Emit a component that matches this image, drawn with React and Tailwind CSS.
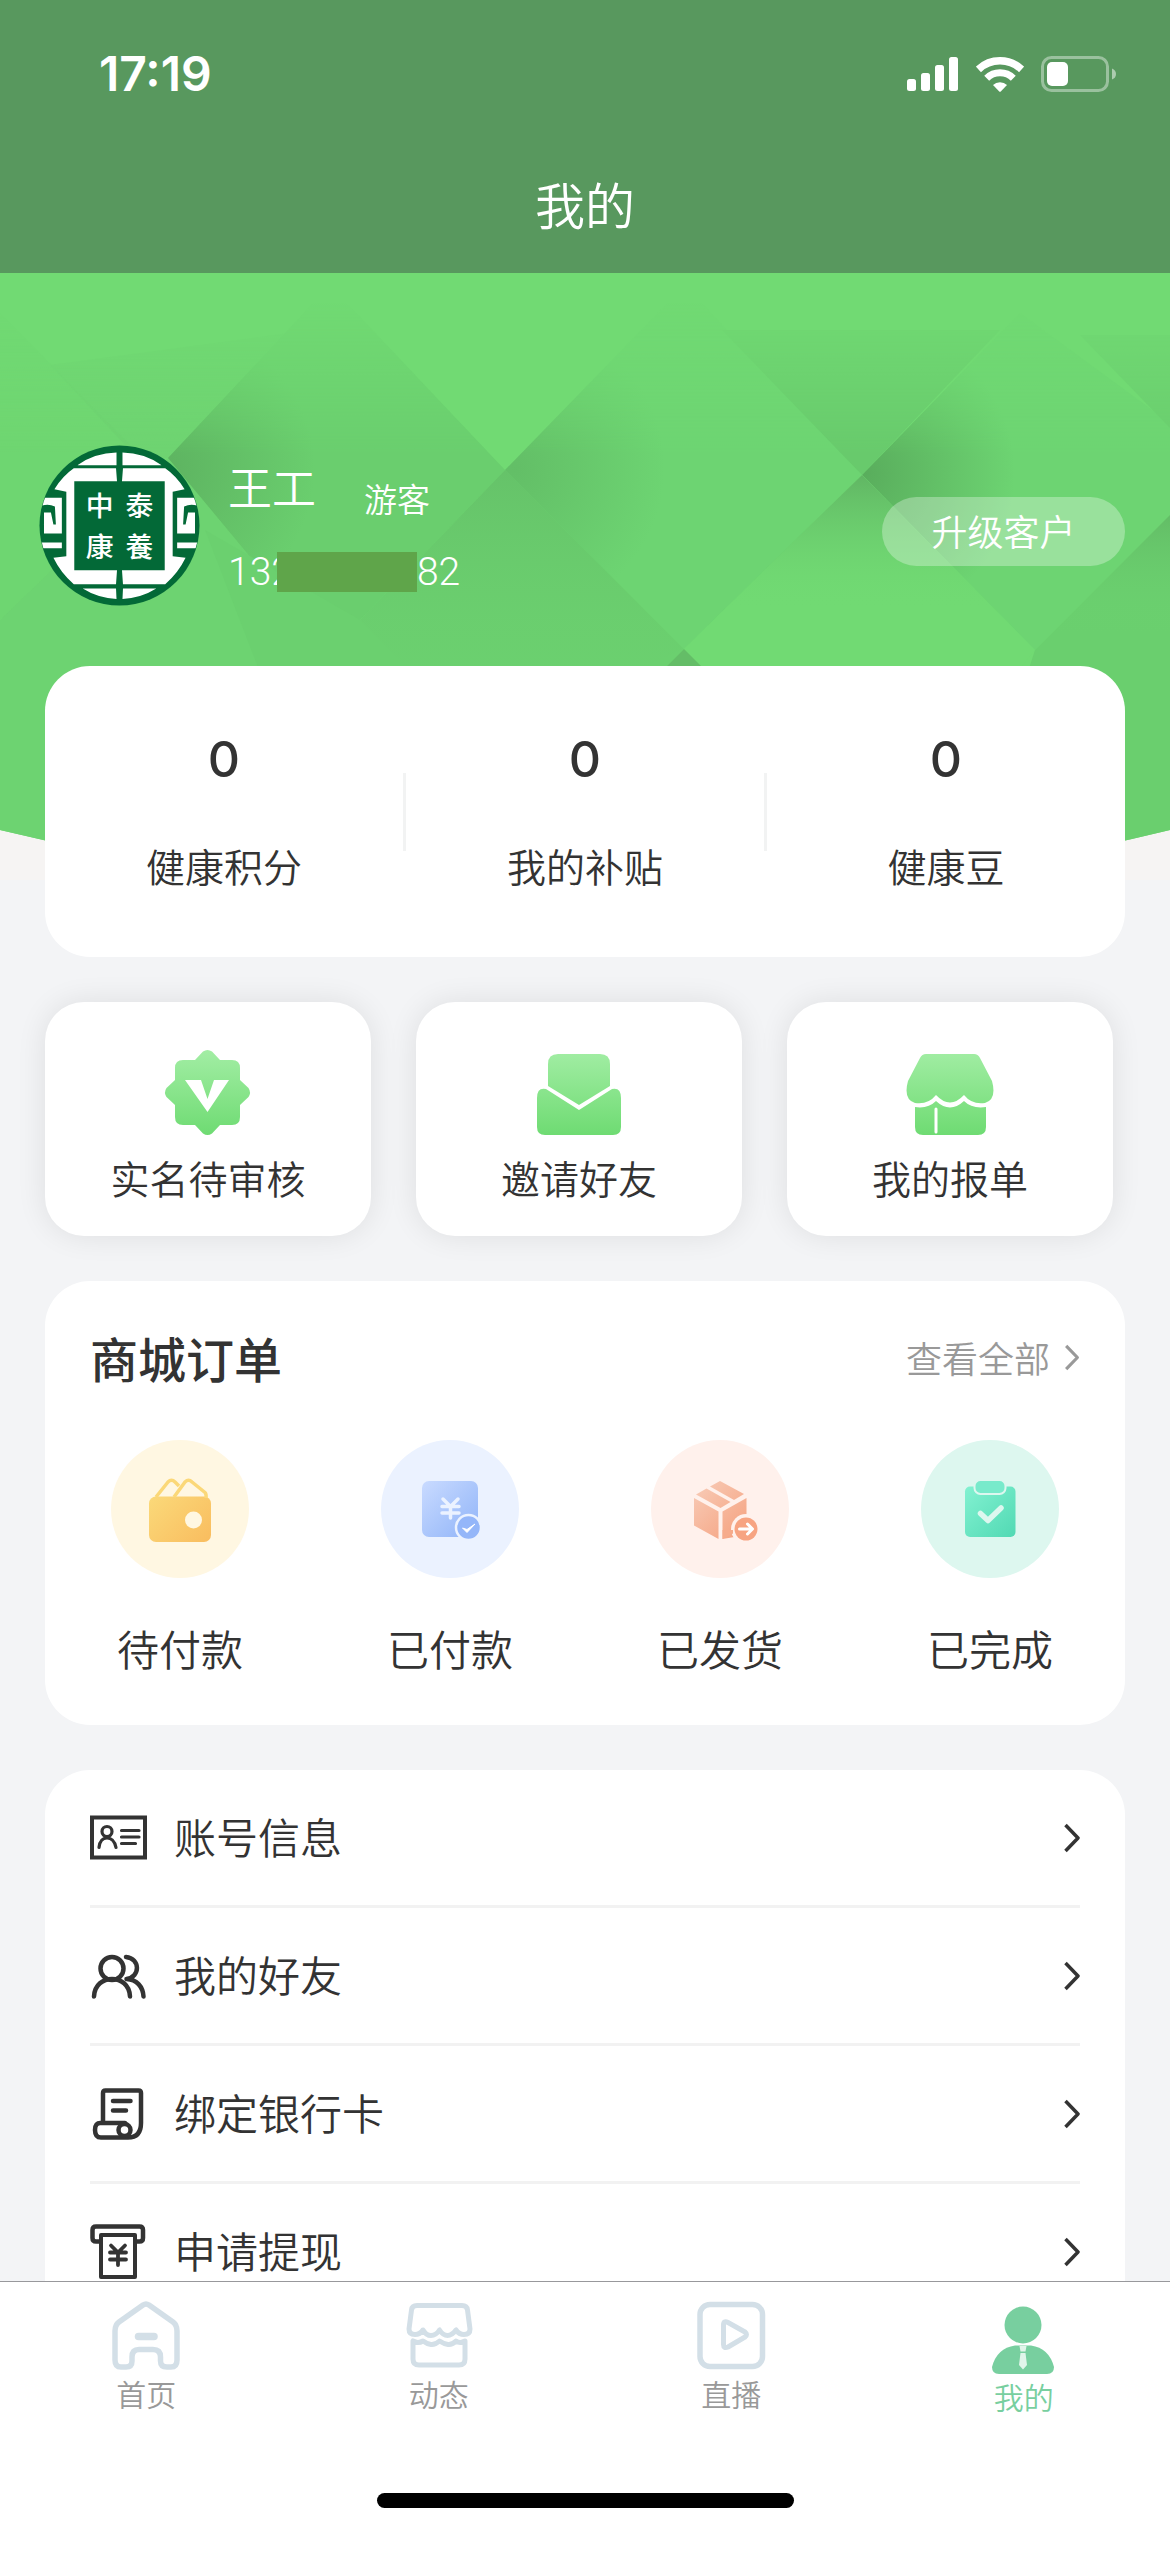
import React from "react";

const FONT = "font-['Noto_Sans_CJK_SC',sans-serif]";

function SignalIcon() {
  return (
    <svg viewBox="0 0 52 34" className="h-[34px] w-[52px]" fill="#fff" aria-hidden="true">
      <rect x="0" y="22" width="9" height="12" rx="2.5" />
      <rect x="14" y="16" width="9" height="18" rx="2.5" />
      <rect x="28" y="8" width="9" height="26" rx="2.5" />
      <rect x="42" y="0" width="9" height="34" rx="2.5" />
    </svg>
  );
}

function WifiIcon() {
  return (
    <svg viewBox="0 0 48 37" className="h-[37px] w-[48px]" fill="none" stroke="#fff" aria-hidden="true">
      <path d="M2.4 13.4A31.500 31.500 0 0 1 45.600 13.400" strokeWidth="7.500" />
      <path d="M10.700 22.200A19 19 0 0 1 37.300 22.200" strokeWidth="7" />
      <path d="M17 29a10 10 0 0 1 14 0l-6 6.200q-1 1-2 0Z" fill="#fff" stroke="none" />
    </svg>
  );
}

function BatteryIcon() {
  return (
    <svg viewBox="0 0 75 36" className="h-[36px] w-[75px]" aria-hidden="true">
      <rect x="1.5" y="1.500" width="65" height="33" rx="9" fill="none" stroke="#fff" strokeOpacity=".4" strokeWidth="3" />
      <rect x="6" y="6" width="21" height="24" rx="5" fill="#fff" />
      <path d="M71 12.500q4 1.500 4 5.500t-4 5.500Z" fill="#fff" fillOpacity=".5" />
    </svg>
  );
}

function HeroBackdrop() {
  return (
    <svg
      viewBox="0 0 1170 607"
      preserveAspectRatio="none"
      className="absolute inset-x-0 top-0 -z-10 h-[607px] w-full"
      aria-hidden="true"
    >
      <defs>
        <clipPath id="heroCurve">
          <path d="M0 0H1170V557Q585 700 0 557Z" />
        </clipPath>
        <linearGradient id="fadeUp" x1="0" y1="0" x2="0" y2="1">
          <stop offset="0" stopColor="#5fb262" stopOpacity=".9" />
          <stop offset=".75" stopColor="#6ccf6f" stopOpacity=".2" />
          <stop offset="1" stopColor="#71da73" stopOpacity="0" />
        </linearGradient>
        <radialGradient id="shadeOne" gradientUnits="userSpaceOnUse" cx="165" cy="195" r="150">
          <stop offset="0" stopColor="#5cb05f" stopOpacity=".9" />
          <stop offset="1" stopColor="#5cb05f" stopOpacity="0" />
        </radialGradient>
        <radialGradient id="shadeTwo" gradientUnits="userSpaceOnUse" cx="515" cy="195" r="150">
          <stop offset="0" stopColor="#5cb05f" stopOpacity=".6" />
          <stop offset="1" stopColor="#5cb05f" stopOpacity="0" />
        </radialGradient>
        <radialGradient id="shadeThree" gradientUnits="userSpaceOnUse" cx="865" cy="200" r="150">
          <stop offset="0" stopColor="#57a95a" stopOpacity=".9" />
          <stop offset="1" stopColor="#57a95a" stopOpacity="0" />
        </radialGradient>
        <linearGradient id="maskFade" gradientUnits="userSpaceOnUse" x1="0" y1="30" x2="0" y2="180">
          <stop offset="0" stopColor="#000" />
          <stop offset="1" stopColor="#fff" />
        </linearGradient>
        <mask id="topFade">
          <rect width="1170" height="607" fill="url(#maskFade)" />
        </mask>
      </defs>
      <rect width="1170" height="607" fill="#f6f4f3" />
      <g clipPath="url(#heroCurve)">
        <rect width="1170" height="607" fill="#71da73" />
        <g mask="url(#topFade)">
          <path d="M0 40L168 210L0 347Z" fill="#6ccf6f" fillOpacity=".4" />
          <path d="M50 92L290 60L168 185L140 188Z" fill="#6ccf6f" fillOpacity=".6" />
          <path d="M0 347L168 185L340 392L560 607H0Z" fill="#6dd371" />
          <path d="M330 12L505 197L360 347L340 392L168 185Z" fill="#6ace6e" />
          <path d="M330 12L505 197L360 347L340 392L168 185Z" fill="url(#shadeOne)" />
          <path d="M505 197L684 376V607H340L205 257L360 347Z" fill="#6bd06f" />
          <path d="M685 12L862 202L684 376L505 197Z" fill="#6dd472" />
          <path d="M685 12L862 202L684 376L505 197Z" fill="url(#shadeTwo)" />
          <path d="M722 57L862 202L1000 57Z" fill="#68ca6c" />
          <path d="M1020 40L1170 150V242L1035 377L862 202Z" fill="#6dd472" />
          <path d="M1020 40L1170 150V242L1035 377L862 202Z" fill="url(#shadeThree)" />
          <path d="M1080 62L1170 155V62Z" fill="#6acd6e" />
        </g>
        <path d="M505 197L684 376L480 470L360 347Z" fill="url(#fadeUp)" fillOpacity=".5" />
        <path d="M862 202L1035 377L1000 420H640L684 376Z" fill="#71da73" />
        <path d="M862 202L995 337H723Z" fill="url(#fadeUp)" />
        <path d="M684 376L640 420H728Z" fill="#64bd67" />
        <path d="M1170 242V607H960L1035 377Z" fill="#6acf6e" />
        <path d="M1170 242V360H1052Z" fill="url(#fadeUp)" fillOpacity=".7" />
      </g>
    </svg>
  );
}

function Emblem() {
  return (
    <svg viewBox="0 0 162 162" className="size-[161px] shrink-0" role="img" aria-label="中泰康養">
      <defs>
        <clipPath id="emblemClip">
          <circle cx="81" cy="81" r="80" />
        </clipPath>
      </defs>
      <circle cx="81" cy="81" r="80.500" fill="#036937" />
      <g clipPath="url(#emblemClip)" fill="#fff">
        <path d="M39 20Q56 8 78 7.500V20.500H39ZM123 20Q106 8 84 7.500V20.500H123Z" />
        <path d="M44 144.500H77.500L78 155Q59 154 44 144.500ZM118 144.500H84.500L84 155Q103 154 118 144.500Z" />
        <path d="M35 23.500H77.500L78.500 36.500H35.500V126H78.500L77.500 140H35Q22 129 14.500 113.500L27.500 112V47L15.500 44.500Q24 31 35 23.500Z" />
        <path d="M127 23.500H84.500L83.500 36.500H126.500V126H83.500L84.500 140H127Q140 129 147.500 113.500L134.500 112V47L146.500 44.500Q138 31 127 23.500Z" />
        <path d="M4 53H23V89H5V68H12L14.500 80H17L16 62Q10 59 3 61Z" />
        <path d="M158 53H139V89H157V68H150L147.500 80H145L146 62Q152 59 159 61Z" />
        <path d="M2 98H23V104H4ZM160 98H139V104H158Z" />
      </g>
      <g fill="#fff" fontFamily="'Noto Sans CJK SC', sans-serif" fontSize="28" fontWeight="500" textAnchor="middle">
        <text x="61" y="71">中</text>
        <text x="101" y="71">泰</text>
        <text x="61" y="113">康</text>
        <text x="101" y="113">養</text>
      </g>
    </svg>
  );
}

function GreenFill({ id }) {
  return (
    <defs>
      <linearGradient id={id} gradientUnits="userSpaceOnUse" x1="0" y1="4" x2="0" y2="88">
        <stop offset="0" stopColor="#a1eda3" />
        <stop offset="1" stopColor="#6edb72" />
      </linearGradient>
    </defs>
  );
}

function BadgeIcon() {
  return (
    <svg viewBox="0 0 90 90" className="size-[90px]" aria-hidden="true">
      <GreenFill id="badgeFill" />
      <path
        fill="url(#badgeFill)"
        d="M40 3.500Q44.500 .5 49 3.500L57 12H69Q77 12 77 20V32L85.500 40Q88.500 44.500 85.500 49L77 57V69Q77 77 69 77H57L49 85.500Q44.500 88.500 40 85.500L32 77H20Q12 77 12 69V57L3.500 49Q.5 44.500 3.500 40L12 32V20Q12 12 20 12H32Z"
      />
      <path fill="#fff" d="M22 32H38L44.500 51L51 32H66L44.500 64Z" />
    </svg>
  );
}

function InviteIcon() {
  return (
    <svg viewBox="0 0 90 90" className="size-[90px]" aria-hidden="true">
      <GreenFill id="inviteFill" />
      <g fill="url(#inviteFill)">
        <path d="M14 38V16Q14 6 24 6H66Q76 6 76 16V38L45 57Z" />
        <path d="M3 50Q3 39 12 41L45 62L78 41Q87 39 87 50V79Q87 87 79 87H11Q3 87 3 79Z" />
      </g>
    </svg>
  );
}

function ShopIcon() {
  return (
    <svg viewBox="0 0 90 90" className="size-[90px]" aria-hidden="true">
      <GreenFill id="shopFill" />
      <g fill="url(#shopFill)">
        <path d="M21 6H69Q73 6 75 10L87 33Q92 51 80 55Q67 57 59 47Q45 62 31 47Q23 57 10 55Q-2 51 3 33L15 10Q17 6 21 6Z" />
        <path d="M10 59Q23 61 31 53Q45 66 59 53Q67 61 81 59V79Q81 87 73 87H18Q10 87 10 79Z" />
      </g>
      <path d="M31 61V84" stroke="#fff" strokeWidth="3" strokeLinecap="round" />
    </svg>
  );
}

function OrderFill({ id, from, to }) {
  return (
    <defs>
      <linearGradient id={id} gradientUnits="userSpaceOnUse" x1="42" y1="42" x2="98" y2="98">
        <stop offset="0" stopColor={from} />
        <stop offset="1" stopColor={to} />
      </linearGradient>
    </defs>
  );
}

function WalletIcon() {
  return (
    <svg viewBox="0 0 138 138" className="size-[138px]" aria-hidden="true">
      <OrderFill id="walletFill" from="#fbdc7c" to="#f9be60" />
      <circle cx="69" cy="69" r="69" fill="#fff7e2" />
      <rect x="38" y="56.500" width="62" height="45.500" rx="7" fill="url(#walletFill)" />
      <path
        d="M45 57L57 42Q60.500 38.500 64 42L68 46M63 57L74 42Q77.500 38.500 81 42L94 52.500Q95.500 54 95 58"
        fill="none"
        stroke="#fbd878"
        strokeWidth="3.500"
        strokeLinejoin="round"
      />
      <circle cx="82.500" cy="80" r="8.500" fill="#fff7e2" />
    </svg>
  );
}

function PaidIcon() {
  return (
    <svg viewBox="0 0 138 138" className="size-[138px]" aria-hidden="true">
      <OrderFill id="paidFill" from="#c8daff" to="#8fb3f8" />
      <circle cx="69" cy="69" r="69" fill="#ebf2ff" />
      <rect x="41" y="41" width="56" height="56" rx="7" fill="url(#paidFill)" />
      <path d="M62 59L69.500 66.500L77 59M61 66.500H78M61 73H78M69.500 66.500V78" fill="none" stroke="#ebf2ff" strokeWidth="3.500" strokeLinecap="round" />
      <circle cx="87.500" cy="87.500" r="12.500" fill="#94b6f9" stroke="#ebf2ff" strokeWidth="2.500" />
      <path d="M81.500 88L86 92.500L94 84L86 89.500Z" fill="#fff" stroke="#fff" strokeLinejoin="round" />
    </svg>
  );
}

function ShippedIcon() {
  return (
    <svg viewBox="0 0 138 138" className="size-[138px]" aria-hidden="true">
      <OrderFill id="shipFill" from="#f8cdb9" to="#f59f7c" />
      <circle cx="69" cy="69" r="69" fill="#fff1ec" />
      <g fill="url(#shipFill)">
        <path d="M69 41L93 54L83 60L59 46.500Z" />
        <path d="M55.500 48.500L79.500 62L69.500 68L45 54.500Z" />
        <path d="M43 58L67.500 71.500V99L43 85.500Z" />
        <path d="M71.500 71.500L95.500 58V95L71.500 99Z" />
      </g>
      <circle cx="95" cy="89" r="15" fill="#fff1ec" />
      <path d="M71.500 90H82V93.500L71.500 99Z" fill="#f6ab8b" />
      <circle cx="95" cy="89" r="11.500" fill="#f7a482" />
      <path d="M88.500 89H100M96.500 84L101.500 89L96.500 94" fill="none" stroke="#fff" strokeWidth="3" strokeLinecap="round" strokeLinejoin="round" />
    </svg>
  );
}

function DoneIcon() {
  return (
    <svg viewBox="0 0 138 138" className="size-[138px]" aria-hidden="true">
      <OrderFill id="doneFill" from="#86f3d3" to="#4fd8b2" />
      <circle cx="69" cy="69" r="69" fill="#ddf7ef" />
      <rect x="44" y="46.500" width="50.500" height="50.500" rx="5" fill="url(#doneFill)" />
      <rect x="53.500" y="40" width="31" height="14" rx="6" fill="#78eacb" stroke="#ddf7ef" strokeWidth="2" />
      <path d="M59.500 73.500L67 80.500L80 68" fill="none" stroke="#ddf7ef" strokeWidth="5.500" strokeLinecap="round" strokeLinejoin="round" />
    </svg>
  );
}

function LineIcon({ children, width = 4.5 }) {
  return (
    <svg
      viewBox="0 0 57 57"
      className="size-[57px]"
      fill="none"
      stroke="#333"
      strokeWidth={width}
      strokeLinecap="round"
      strokeLinejoin="round"
      aria-hidden="true"
    >
      {children}
    </svg>
  );
}

const AccountIcon = () => (
  <LineIcon width={3.2}>
    <rect x="2" y="8.500" width="53" height="40" strokeLinejoin="miter" strokeWidth="4" />
    <circle cx="17" cy="22.500" r="5" />
    <path d="M9 38.500Q10 29 17 29T26 38.500M31.500 21.500H49M31.500 28H49M31.500 34.500H45.500" />
  </LineIcon>
);

const FriendsIcon = () => (
  <LineIcon>
    <circle cx="22" cy="21.500" r="11.500" />
    <path d="M4 49.500C5 26 39 26 40 49.500M36 10C50.500 11.500 50.500 30 36.500 32C47 32.500 53 40 53.500 49.500" />
  </LineIcon>
);

const CardIcon = () => (
  <LineIcon>
    <path d="M13 37V8Q13 5.500 15.500 5.500H48.500Q51 5.500 51 8V38Q51 52.500 38 52.500H11Q5 52.500 5 45T11 38H35" />
    <circle cx="34.500" cy="45" r="6" />
    <path d="M23 16H40.500M23 25.500H36" />
  </LineIcon>
);

const WithdrawIcon = () => (
  <LineIcon>
    <path d="M10 18.500H6Q2.500 18.500 2.500 15V7Q2.500 3.500 6 3.500H49.500Q53 3.500 53 7V15Q53 18.500 49.500 18.500H46" />
    <path d="M11 12H45V54H11Z" strokeWidth="4" />
    <path d="M21 22.500L28 29.500L35 22.500M20 29.500H36M20 36.500H36M28 29.500V42" strokeWidth="3.800" />
  </LineIcon>
);

function Chevron({ className }) {
  return (
    <svg viewBox="0 0 16 30" className={className} fill="none" stroke="currentColor" strokeWidth="3.500" strokeLinejoin="round" aria-hidden="true">
      <path d="M1.500 2L14 15L1.500 28" />
    </svg>
  );
}

function TabIcon({ children }) {
  return (
    <svg viewBox="0 0 72 72" className="size-[72px]" fill="none" stroke="#d3dfe7" strokeWidth="5.500" strokeLinejoin="round" strokeLinecap="round" aria-hidden="true">
      {children}
    </svg>
  );
}

const HomeIcon = () => (
  <TabIcon>
    <path d="M33 5Q36 3 39 5L63 22Q67 25 67 31V60Q67 67 61 67H57Q50.500 67 50.500 61V57Q50.500 49.500 43 49.500H29Q22 49.500 22 57V61Q22 67 16 67H11Q5 67 5 60V31Q5 25 9 22Z" />
    <path d="M28.500 36.500H44" strokeWidth="7.500" />
  </TabIcon>
);

const FeedIcon = () => (
  <TabIcon>
    <path d="M14 5.500H59Q64 5.500 64.500 10L67 29Q67 34.500 61 34.500Q56 34.500 53 30Q49 35.500 44.500 35.500T36.500 30Q33 35.500 28 35.500T20 30Q17 34.500 12 34.500Q6 34.500 6 29L8.500 10Q9 5.500 14 5.500Z" strokeWidth="5" />
    <path d="M10 41V59Q10 65 16 65H56Q62 65 62 59V41Q57 44 53 41Q49 45 45 44.500T36.500 41Q32 45 28 44.500T20 41Q15 44 10 41Z" strokeWidth="5" />
  </TabIcon>
);

const LiveIcon = () => (
  <TabIcon>
    <rect x="5" y="4.500" width="62.500" height="62" rx="10" />
    <path d="M28.500 25Q28.500 20 33 22.500L50 32Q53 34.500 50 37L33 47Q28.500 49 28.500 44.500Z" strokeWidth="5" />
  </TabIcon>
);

const MineIcon = () => (
  <svg viewBox="0 0 75 75" className="size-[75px]" aria-hidden="true">
    <circle cx="37" cy="25" r="18.500" fill="#78cf9f" />
    <path d="M29 45.500H45Q63 48 68 67Q68 74 61 74H13Q6 74 6 67Q11 48 29 45.500Z" fill="#78cf9f" />
    <path d="M33.500 46H40.500L39.500 51.500H34.500ZM34.500 53H39.500L41 65L37 69.500L33 65Z" fill="#e1f5ea" />
  </svg>
);

const stats = [
  ["0", "健康积分"],
  ["0", "我的补贴"],
  ["0", "健康豆"],
];

const shortcuts = [
  [BadgeIcon, "实名待审核"],
  [InviteIcon, "邀请好友"],
  [ShopIcon, "我的报单"],
];

const orders = [
  [WalletIcon, "待付款"],
  [PaidIcon, "已付款"],
  [ShippedIcon, "已发货"],
  [DoneIcon, "已完成"],
];

const menu = [
  [AccountIcon, "账号信息"],
  [FriendsIcon, "我的好友"],
  [CardIcon, "绑定银行卡"],
  [WithdrawIcon, "申请提现"],
];

const tabs = [
  [HomeIcon, "首页", false],
  [FeedIcon, "动态", false],
  [LiveIcon, "直播", false],
  [MineIcon, "我的", true],
];

export default function App() {
  return (
    <div className={`flex h-screen flex-col overflow-hidden bg-[#f3f4f6] font-[350] text-[#333] ${FONT}`}>
      <header className="shrink-0 bg-[#58985e] pt-11 text-white">
        <div className="flex h-[60px] items-center justify-between pr-[54px] pl-[99px]">
          <time className="font-['Inter',sans-serif] text-[48px] font-semibold">17:19</time>
          <div className="flex items-center gap-[17px]">
            <SignalIcon />
            <WifiIcon />
            <BatteryIcon />
          </div>
        </div>
        <h1 className="mt-[33px] flex h-[136px] items-center justify-center pb-1 text-[50px]">我的</h1>
      </header>

      <main className="min-h-0 flex-1 overflow-hidden">
        <section className="relative isolate px-[45px] pt-[172px]">
          <HeroBackdrop />
          <div className="-ml-1.5 flex h-[161px] items-center text-white">
            <Emblem />
            <div className="ml-[28px]">
              <div className="flex items-end gap-12">
                <h2 className="text-[44px] leading-[60px]">王工</h2>
                <span className="text-[33px] leading-[36px]">游客</span>
              </div>
              <p className="mt-8 flex items-center font-['Roboto',sans-serif] text-[39px] leading-[48px]">
                <span>132</span>
                <span className="relative -ml-4 h-10 w-[140px] bg-[#5fa54a]" />
                <span>82</span>
              </p>
            </div>
            <button type="button" className="mt-3 ml-auto h-[69px] w-[243px] rounded-full bg-white/30 pb-1 text-[36px]">
              升级客户
            </button>
          </div>

          <div className="mt-[60px] flex items-center rounded-[45px] bg-white pt-[63px] pb-[62px]">
            {stats.map(([value, label], i) => (
              <React.Fragment key={label}>
                {i > 0 && <span className="h-[78px] w-[3px] bg-[#f2f3f3]" />}
                <a href="#stats" className="flex flex-1 flex-col items-center">
                  <strong className="font-['Inter',sans-serif] text-[50px] leading-[60px] font-medium">{value}</strong>
                  <span className="mt-[46px] text-[39px] leading-[60px]">{label}</span>
                </a>
              </React.Fragment>
            ))}
          </div>
        </section>

        <nav className="mt-[45px] grid grid-cols-3 gap-[45px] pr-[57px] pl-[45px]" aria-label="快捷入口">
          {shortcuts.map(([Icon, label]) => (
            <a key={label} href="#shortcut" className="flex flex-col items-center rounded-[39px] bg-white pt-[46px] pb-8 shadow-[0_0_30px_rgba(0,0,0,0.09)]">
              <Icon />
              <span className="mt-3 text-[39px] leading-[54px]">{label}</span>
            </a>
          ))}
        </nav>

        <section className="mx-[45px] mt-[45px] rounded-[45px] bg-white pt-10 pb-[47px]">
          <div className="flex h-[72px] items-center justify-between px-[45px]">
            <h2 className="text-[48px] leading-[72px] font-medium">商城订单</h2>
            <a href="#orders" className="flex items-center gap-[14px] text-[36px] leading-[60px] text-[#999]">
              查看全部
              <Chevron className="h-[27px] w-[16px]" />
            </a>
          </div>
          <div className="mt-[47px] grid grid-cols-4">
            {orders.map(([Icon, label]) => (
              <a key={label} href="#orders" className="flex flex-col items-center">
                <Icon />
                <span className="mt-10 text-[42px] leading-[60px]">{label}</span>
              </a>
            ))}
          </div>
        </section>

        <ul className="mx-[45px] mt-[45px] rounded-t-[45px] bg-white px-[45px]">
          {menu.map(([Icon, label]) => (
            <li key={label} className="border-b-3 border-[#f2f2f2]">
              <a href="#menu" className="flex h-[135px] items-center">
                <Icon />
                <span className="ml-[27px] pb-1 text-[42px] leading-[60px]">{label}</span>
                <Chevron className="ml-auto h-[30px] w-[16px]" />
              </a>
            </li>
          ))}
        </ul>
      </main>

      <footer className="shrink-0 border-t border-[#98989c] bg-white pt-[18px] pb-[41px]">
        <nav className="grid grid-cols-4" aria-label="主导航">
          {tabs.map(([Icon, label, active]) => (
            <a
              key={label}
              href="#tab"
              aria-current={active ? "page" : undefined}
              className={`flex flex-col items-center text-[30px] leading-[36px] ${active ? "text-[#78cf9f]" : "text-[#999]"}`}
            >
              <Icon />
              <span className="mt-[3px]">{label}</span>
            </a>
          ))}
        </nav>
        <div className="mx-auto mt-[79px] h-[15px] w-[417px] rounded-full bg-black" />
      </footer>
    </div>
  );
}
